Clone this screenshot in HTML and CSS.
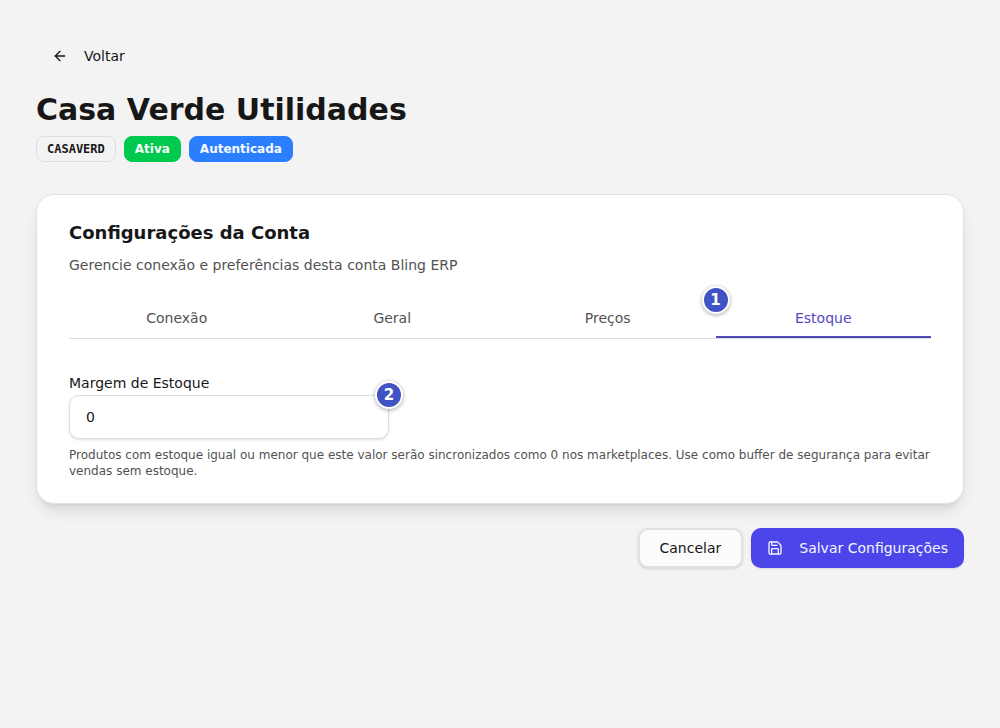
FILE: index.html
```html
<!DOCTYPE html>
<html lang="pt-BR">
<head>
<meta charset="utf-8">
<meta name="viewport" content="width=device-width, initial-scale=1">
<title>Casa Verde Utilidades</title>
<link rel="stylesheet" href="styles.css">
</head>
<body>
<main class="page">
  <header class="header">
    <button class="btn btn-ghost" type="button">
      <svg class="icon" viewBox="0 0 24 24" aria-hidden="true"><path d="m12 19-7-7 7-7"/><path d="M19 12H5"/></svg>
      Voltar
    </button>
    <h1 class="title">Casa Verde Utilidades</h1>
    <div class="badges">
      <span class="badge badge-code">CASAVERD</span>
      <span class="badge badge-active">Ativa</span>
      <span class="badge badge-auth">Autenticada</span>
    </div>
  </header>

  <form class="form">
    <section class="card">
      <h2 class="card-title">Configurações da Conta</h2>
      <p class="card-description">Gerencie conexão e preferências desta conta Bling ERP</p>
      <div class="tabs" role="tablist">
        <button class="tab" type="button" role="tab" aria-selected="false">Conexão</button>
        <button class="tab" type="button" role="tab" aria-selected="false">Geral</button>
        <button class="tab" type="button" role="tab" aria-selected="false">Preços</button>
        <div class="tab-marked">
          <button class="tab tab-current" type="button" role="tab" aria-selected="true">Estoque</button>
          <span class="marker marker-start">1</span>
        </div>
      </div>
      <div class="field">
        <label class="label" for="margin">Margem de Estoque</label>
        <div class="input-wrap">
          <input class="input" id="margin" type="text" inputmode="numeric" value="0" aria-describedby="margin-help">
          <span class="marker marker-end">2</span>
        </div>
        <p class="help" id="margin-help">Produtos com estoque igual ou menor que este valor serão sincronizados como 0 nos marketplaces. Use como buffer de segurança para evitar vendas sem estoque.</p>
      </div>
    </section>
    <div class="actions">
      <button class="btn btn-outline" type="button">Cancelar</button>
      <button class="btn btn-primary" type="button">
        <svg class="icon" viewBox="0 0 24 24" aria-hidden="true"><path d="M15.2 3a2 2 0 0 1 1.4.6l3.8 3.8a2 2 0 0 1 .6 1.4V19a2 2 0 0 1-2 2H5a2 2 0 0 1-2-2V5a2 2 0 0 1 2-2z"/><path d="M17 21v-7a1 1 0 0 0-1-1H8a1 1 0 0 0-1 1v7"/><path d="M7 3v4a1 1 0 0 0 1 1h7"/></svg>
        Salvar Configurações
      </button>
    </div>
  </form>
</main>
</body>
</html>
```
FILE: styles.css
```css
*,
*::before,
*::after {
  box-sizing: border-box;
}

body {
  margin: 0;
  background: #f3f3f3;
  color: #171717;
  font-family: "DejaVu Sans", sans-serif;
  font-size: 14px;
  line-height: 20px;
}

h1,
h2,
p {
  margin: 0;
}

button,
input {
  font: inherit;
  color: inherit;
}

.page {
  padding: 36px;
}

.header {
  display: flex;
  flex-direction: column;
  align-items: flex-start;
}

.btn {
  display: inline-flex;
  align-items: center;
  justify-content: center;
  gap: 16px;
  height: 40px;
  padding: 0 16px;
  border: 0;
  border-radius: 10px;
  background: transparent;
  cursor: pointer;
}

.icon {
  width: 16px;
  height: 16px;
  fill: none;
  stroke: currentColor;
  stroke-width: 2;
  stroke-linecap: round;
  stroke-linejoin: round;
}

.title {
  margin-top: 16px;
  font-size: 30px;
  font-weight: 700;
  line-height: 36px;
}

.badges {
  display: flex;
  flex-wrap: wrap;
  gap: 8px;
  margin-top: 8px;
}

.badge {
  padding: 4px 10px;
  border: 1px solid transparent;
  border-radius: 8px;
  font-size: 12px;
  font-weight: 700;
  line-height: 16px;
}

.badge-code {
  border-color: #dedede;
  font-family: "DejaVu Sans Mono", monospace;
}

.badge-active {
  background: #00c950;
  border-color: #00c950;
  color: #f8fffa;
}

.badge-auth {
  background: #2b7fff;
  border-color: #2b7fff;
  color: #f8fbff;
}

.form {
  display: flex;
  flex-direction: column;
  gap: 24px;
  margin-top: 32px;
}

.card {
  padding: 24px 32px;
  border: 1px solid #e1e1e1;
  border-radius: 18px;
  background: #fff;
  box-shadow: 0 10px 15px -3px rgb(0 0 0 / 10%), 0 4px 6px -4px rgb(0 0 0 / 10%);
}

.card-title {
  font-size: 18px;
  font-weight: 700;
  line-height: 28px;
}

.card-description {
  margin-top: 8px;
  color: #525252;
}

.tabs {
  display: grid;
  grid-template-columns: repeat(4, 1fr);
  margin-top: 24px;
  border-bottom: 1px solid #dedede;
}

.tab {
  width: 100%;
  height: 39px;
  padding: 0 16px;
  border: 0;
  border-bottom: 2px solid transparent;
  background: transparent;
  color: #525252;
  cursor: pointer;
}

.tab-marked {
  position: relative;
}

.tab-current {
  border-bottom-color: #5149b8;
  color: #5549c2;
}

.marker {
  position: absolute;
  width: 28px;
  height: 28px;
  border: 2px solid #fff;
  border-radius: 50%;
  background: #4053c4;
  box-shadow: 0 1px 4px rgb(0 0 0 / 35%);
  color: #fff;
  font-size: 15px;
  font-weight: 700;
  line-height: 24px;
  text-align: center;
}

.marker-start {
  top: -13px;
  left: -14px;
}

.marker-end {
  top: -14px;
  right: -14px;
}

.field {
  margin-top: 36px;
}

.label {
  display: block;
  margin-bottom: 4px;
  line-height: 16px;
}

.input-wrap {
  position: relative;
  max-width: 320px;
}

.input {
  display: block;
  width: 100%;
  height: 44px;
  padding: 0 16px;
  border: 1px solid #dedede;
  border-radius: 10px;
  background: #fff;
  box-shadow: 0 1px 3px rgb(0 0 0 / 10%), 0 1px 2px -1px rgb(0 0 0 / 10%);
}

.help {
  margin-top: 8px;
  color: #525252;
  font-size: 12px;
  line-height: 16px;
}

.actions {
  display: flex;
  flex-wrap: wrap;
  justify-content: flex-end;
  gap: 8px;
}

.btn-outline {
  padding: 0 20px;
  border: 2px solid #e1e1e1;
  background: #fbfbfb;
  box-shadow: 0 1px 3px rgb(0 0 0 / 10%), 0 1px 2px -1px rgb(0 0 0 / 10%);
}

.btn-primary {
  background: #4c45ea;
  box-shadow: 0 1px 2px rgb(0 0 0 / 10%);
  color: #f5f5ff;
}
```
